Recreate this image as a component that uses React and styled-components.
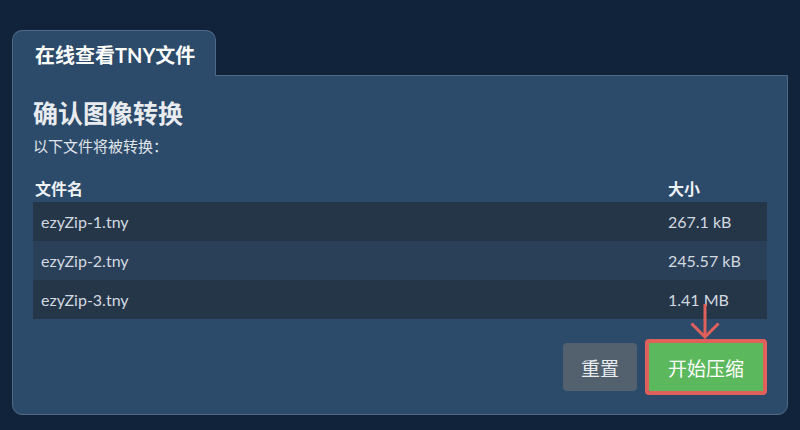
import React from 'react';
import styled, { createGlobalStyle } from 'styled-components';

const GlobalStyle = createGlobalStyle`
  html, body {
    margin: 0;
    padding: 0;
    background: #11233a;
    font-family: Lato, "Noto Sans CJK SC", sans-serif;
    color: #e4e8ee;
  }
`;

const Page = styled.div`
  width: 800px;
  height: 430px;
  box-sizing: border-box;
  padding: 30px 12px 0 12px;
`;

const Tab = styled.div`
  width: 204px;
  height: 46px;
  box-sizing: border-box;
  background: #2c4a6a;
  border: 1px solid #4f6a88;
  border-bottom: none;
  border-radius: 10px 10px 0 0;
  font-size: 20px;
  font-weight: 700;
  line-height: 24px;
  color: #ffffff;
  padding: 12px 0 0 22px;
  position: relative;
  z-index: 1;
  margin-bottom: -1px;
`;

const Panel = styled.div`
  height: 340px;
  box-sizing: border-box;
  background: #2c4a6a;
  border: 1px solid #4f6a88;
  border-radius: 0 0 10px 10px;
  padding: 20px 20px 0 20px;
`;

const Title = styled.h2`
  margin: 0;
  font-size: 25px;
  font-weight: 700;
  line-height: 34px;
  color: #e8ecf0;
`;

const Sub = styled.p`
  margin: 5px 0 0;
  font-size: 15px;
  line-height: 22px;
  color: #e0e5eb;
`;

const Table = styled.div`
  margin-top: 17px;
  width: 734px;
`;

const Row = styled.div`
  display: grid;
  grid-template-columns: 1fr 107px;
  height: ${p => (p.$head ? '28px' : '39px')};
  align-items: center;
  background: ${p => (p.$head ? 'transparent' : p.$alt ? '#2a4058' : '#253649')};
  font-size: 16px;
  font-weight: ${p => (p.$head ? 700 : 400)};
  color: ${p => (p.$head ? '#eef1f5' : '#d3d9e0')};
`;

const Cell = styled.div`
  padding-left: ${p => (p.$first && p.$head ? '2px' : '8px')};
`;

const Actions = styled.div`
  display: flex;
  justify-content: flex-end;
  align-items: center;
  gap: 8px;
  width: 734px;
  margin-top: 20px;
  position: relative;
`;

const Reset = styled.button`
  width: 74px;
  height: 48px;
  border: none;
  border-radius: 4px;
  background: #53606d;
  color: #e8ecf0;
  font-family: inherit;
  font-size: 19px;
`;

const Start = styled.button`
  width: 122px;
  height: 56px;
  box-sizing: border-box;
  border: 4px solid #e0605b;
  border-radius: 4px;
  background: #5cb85c;
  color: #ffffff;
  font-family: inherit;
  font-size: 19px;
`;

const Arrow = styled.svg`
  position: absolute;
  right: 47px;
  top: -36px;
`;

const files = [
  { name: 'ezyZip-1.tny', size: '267.1 kB' },
  { name: 'ezyZip-2.tny', size: '245.57 kB' },
  { name: 'ezyZip-3.tny', size: '1.41 MB' },
];

export default function App() {
  return (
    <Page>
      <GlobalStyle />
      <Tab>在线查看TNY文件</Tab>
      <Panel>
        <Title>确认图像转换</Title>
        <Sub>以下文件将被转换：</Sub>
        <Table>
          <Row $head>
            <Cell $head $first>文件名</Cell>
            <Cell $head>大小</Cell>
          </Row>
          {files.map((f, i) => (
            <Row key={f.name} $alt={i % 2 === 1}>
              <Cell>{f.name}</Cell>
              <Cell>{f.size}</Cell>
            </Row>
          ))}
        </Table>
        <Actions>
          <Reset>重置</Reset>
          <Start>开始压缩</Start>
          <Arrow width="30" height="36" viewBox="0 0 30 36">
            <path d="M15 1 V34 M1.5 20.5 L15 34 L28.5 20.5" fill="none" stroke="#e0605b" strokeWidth="3" />
          </Arrow>
        </Actions>
      </Panel>
    </Page>
  );
}
